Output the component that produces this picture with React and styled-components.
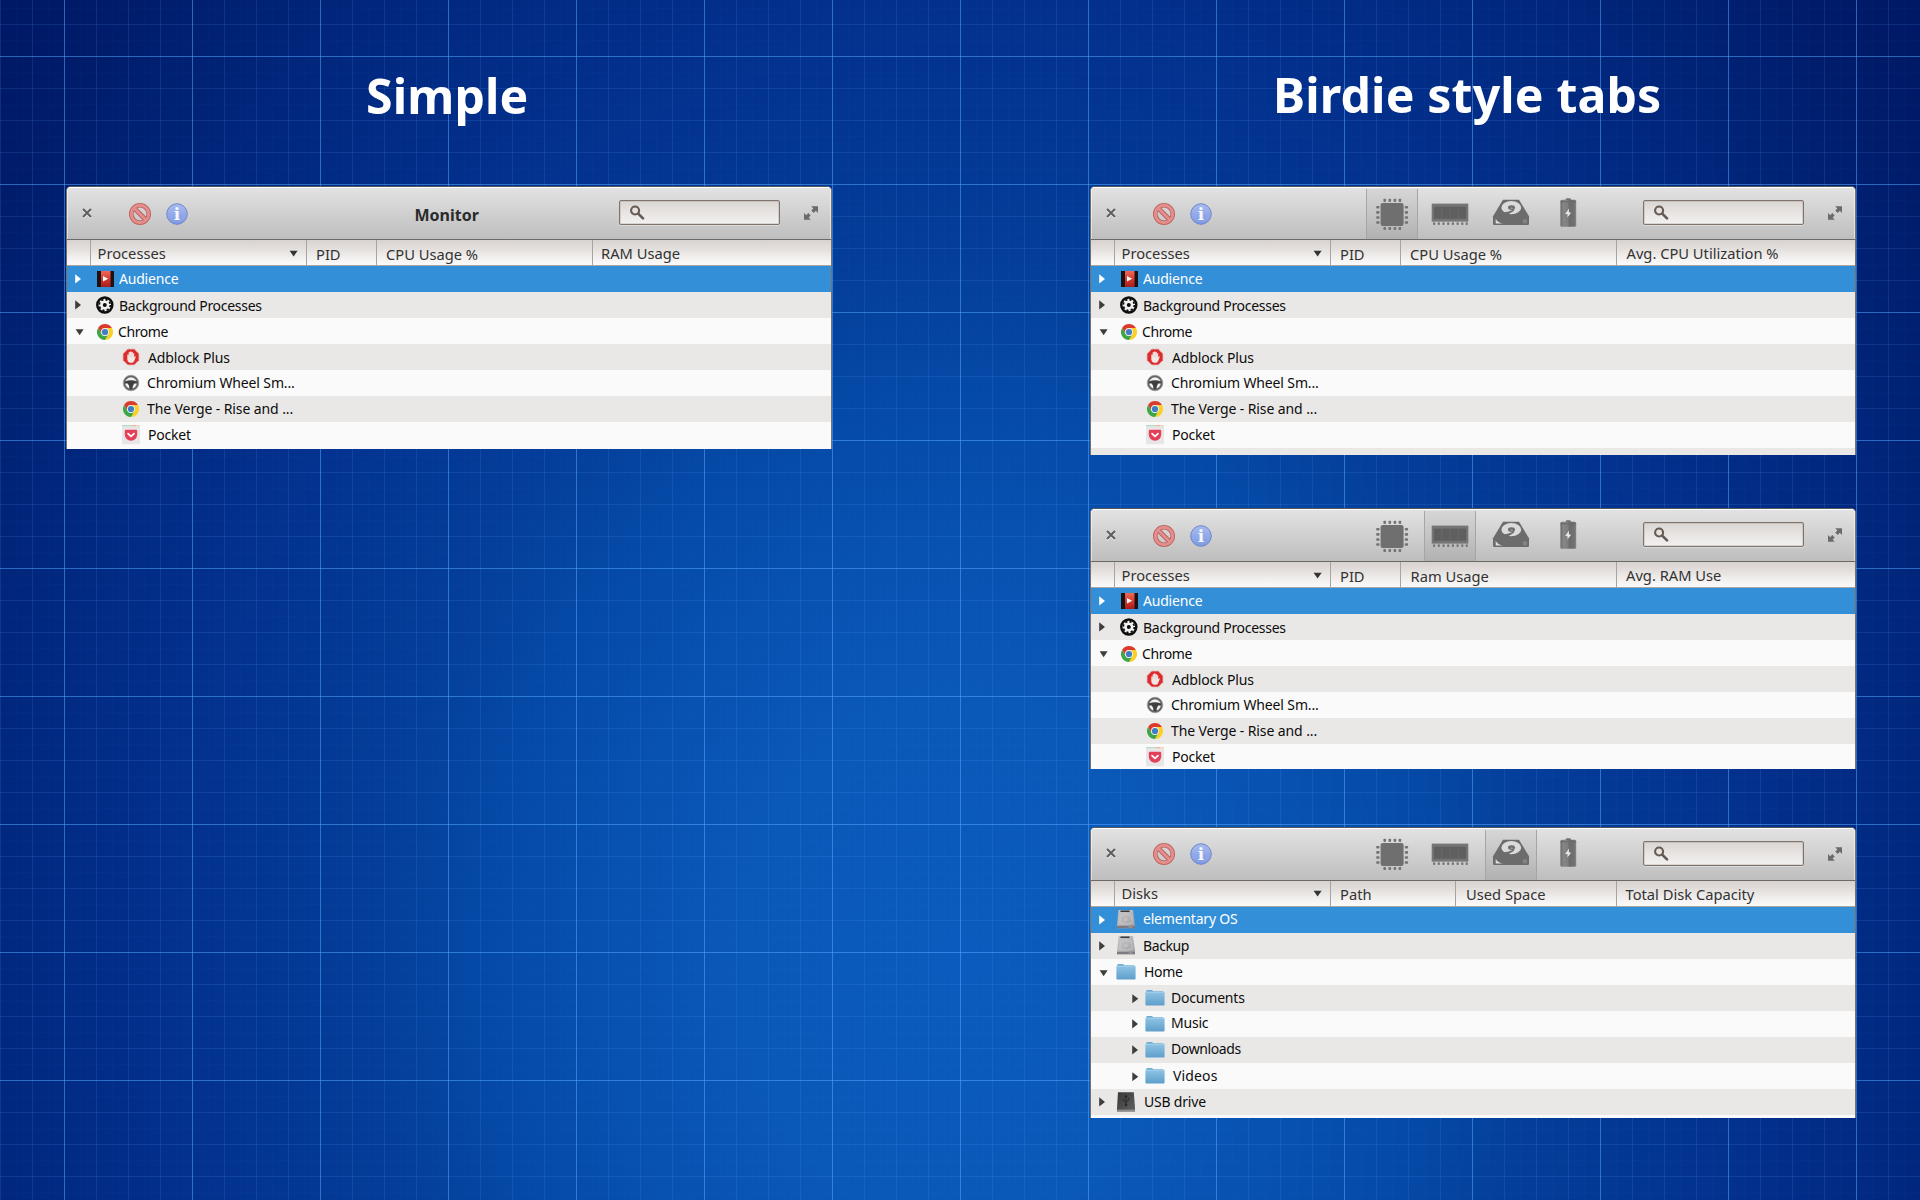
import React from 'react';
import styled, { createGlobalStyle, css } from 'styled-components';

const Global = createGlobalStyle`
  * { box-sizing: border-box; }
  body { margin: 0; overflow: hidden; }
  svg { display: block; flex: none; overflow: visible; }
`;

const major = 'rgba(80, 170, 255, 0.45)';
const minor = 'rgba(90, 160, 255, 0.13)';
const fine = 'rgba(90, 160, 255, 0.025)';

const Page = styled.main`
  display: flex;
  width: 1920px;
  height: 1200px;
  overflow: hidden;
  font-family: 'Noto Sans', 'Open Sans', sans-serif;
  background-image:
    linear-gradient(to right, ${major} 1px, transparent 1px),
    linear-gradient(to bottom, ${major} 1px, transparent 1px),
    linear-gradient(to right, ${minor} 1px, transparent 1px),
    linear-gradient(to bottom, ${minor} 1px, transparent 1px),
    linear-gradient(to right, ${fine} 1px, transparent 1px),
    linear-gradient(to bottom, ${fine} 1px, transparent 1px),
    radial-gradient(960px 1150px at 50% 960px,
      #0a5bbd 0%, #0a59b9 20%, #0852b1 36%, #0549a6 50%, #043f9b 60%, #033391 78%, #01287f 100%, #001b69 122%, #001460 145%);
  background-size: 128px 128px, 128px 128px, 32px 32px, 32px 32px, 16px 16px, 16px 16px, auto;
  background-position: 64px 0, 0 56px, 0 0, 0 24px, 0 0, 0 8px, 0 0;
`;

const Column = styled.section`
  display: flex;
  flex-direction: column;
  flex: none;
  width: 766px;
  margin-left: ${p => p.$left}px;
`;

const Heading = styled.h1`
  margin: 0;
  height: 186px;
  padding: ${p => p.$top}px 0 0 ${p => p.$left}px;
  color: #fff;
  font-size: 48.2px;
  font-weight: 700;
  line-height: 60px;
  letter-spacing: 0.15px;
  white-space: nowrap;
`;

const Frame = styled.article`
  display: flex;
  flex-direction: column;
  flex: none;
  height: ${p => p.$height}px;
  margin-bottom: ${p => p.$gap || 0}px;
  border: 1px solid #77716b;
  border-top-color: #54585c;
  border-bottom: 0;
  border-radius: 5px 5px 0 0;
  background: #fbfafa;
  overflow: hidden;
`;

const TitleBar = styled.header`
  display: flex;
  align-items: flex-start;
  flex: none;
  height: 53px;
  border-bottom: 1px solid #6d6967;
  background: linear-gradient(#e3e3e3, #d2d2d2 45%, #bebebe);
  box-shadow: inset 0 1px #fff, inset 1px 0 rgba(255, 255, 255, 0.5), inset -1px 0 rgba(255, 255, 255, 0.5);
`;

const Controls = styled.div`
  display: flex;
  align-items: flex-start;
  width: 552px;
  padding-left: 15px;
`;

const ToolButton = styled.button`
  flex: none;
  padding: 0;
  border: 0;
  background: none;
  margin: ${p => p.$top}px 0 0 ${p => p.$left || 0}px;
`;

const WindowTitle = styled.h2`
  margin: 15px 0 0 227px;
  color: #2b2b2b;
  font-size: 16px;
  line-height: 26px;
  font-weight: 700;
`;

const Tabs = styled.nav`
  display: flex;
  margin: 2px 0 0 154px;
`;

const Tab = styled.button`
  display: flex;
  align-items: flex-start;
  width: 52px;
  height: 50px;
  margin: 0 0 0 ${p => p.$gap}px;
  padding: 0;
  border: 1px solid transparent;
  border-width: 0 1px;
  background: none;
  ${p => p.$active && css`
    border-color: #9d9d9d #a5a5a5;
    background: linear-gradient(#d6d6d6, #c6c6c6 45%, #b1b1b1);
  `}

  svg { margin-top: ${p => -p.$lift}px; }
`;

const SearchField = styled.label`
  display: flex;
  flex: none;
  width: 161px;
  height: 25px;
  margin-top: ${p => p.$top}px;
  padding: 4px 0 0 10px;
  border: 1px solid #7f746d;
  border-radius: 2px;
  background: linear-gradient(#d9d5d2, #e6e3e1 45%, #f3f1f0);
  box-shadow: inset 0 0 0 1px rgba(160, 145, 135, 0.3), 0 1px rgba(255, 255, 255, 0.35);
`;

const ColumnHeads = styled.div`
  display: flex;
  flex: none;
  height: 26px;
  border-bottom: 1px solid #a9a5a1;
  background: linear-gradient(#d9d3d0, #e3dfdc 35%, #f6f4f3 80%, #fbfafa);
`;

const Head = styled.div`
  display: flex;
  justify-content: space-between;
  flex: ${p => (p.$width ? `0 0 ${p.$width}px` : '1')};
  padding: ${p => p.$top ?? 2}px 8px 0 ${p => p.$pad || 9}px;
  border-left: ${p => (p.$first ? 0 : '1px solid #a7a3a0')};
  color: #333;
  font-size: 14.7px;
  line-height: 25px;
  height: 25px;
  white-space: nowrap;
`;

const Row = styled.div`
  display: flex;
  flex: none;
  height: 26px;
  color: ${p => (p.$selected ? '#fff' : '#0c0c0c')};
  background: ${p => (p.$selected ? '#3390d8' : p.$shade ? '#eae8e6' : '#fbfafa')};
`;

const Twisty = styled.span`
  flex: none;
  width: 20px;
  margin-left: ${p => (p.$child ? 33 : 0)}px;
`;

const IconSlot = styled.span`
  flex: none;
  width: 20px;
  margin-left: ${p => p.$left}px;
`;

const Label = styled.span`
  margin-left: ${p => p.$left}px;
  margin-top: ${p => p.$drop}px;
  font-size: 14px;
  line-height: 26px;
  height: 26px;
  letter-spacing: ${p => p.$track ?? -0.2}px;
  white-space: nowrap;
`;

const CloseIcon = () => (
  <svg width="10" height="10" viewBox="0 0 10 10">
    <path d="M1 1l8 8M9 1l-8 8" stroke="#f2f2f2" strokeWidth="2" transform="translate(0 1)" />
    <path d="M1 1l8 8M9 1l-8 8" stroke="#5e5e5e" strokeWidth="2" />
  </svg>
);

const BanIcon = () => (
  <svg width="22" height="22" viewBox="0 0 22 22" fill="none">
    <circle cx="11" cy="11" r="8.7" stroke="#bd5f60" strokeWidth="4.6" />
    <path d="M5 5l12 12" stroke="#bd5f60" strokeWidth="4.6" />
    <circle cx="11" cy="11" r="8.7" stroke="#e38f8c" strokeWidth="2.9" />
    <path d="M4.8 4.8l12.4 12.4" stroke="#e38f8c" strokeWidth="2.7" />
  </svg>
);

const InfoIcon = () => (
  <svg width="22" height="22" viewBox="0 0 22 22">
    <defs>
      <linearGradient id="infoBlue" x2="0" y2="1">
        <stop stopColor="#a8bbed" />
        <stop offset="1" stopColor="#7f9ae3" />
      </linearGradient>
    </defs>
    <circle cx="11" cy="11" r="10.3" fill="url(#infoBlue)" stroke="#7088cd" />
    <text x="11" y="17" textAnchor="middle" fill="#f4f6fb" fontFamily="'DejaVu Serif', serif" fontWeight="700" fontSize="17">i</text>
  </svg>
);

const SearchIcon = () => (
  <svg width="15" height="15" viewBox="0 0 15 15" fill="none" stroke="#655b55">
    <circle cx="5.1" cy="5.5" r="4" strokeWidth="2.1" />
    <path d="M8.2 8.6l4.8 4.8" strokeWidth="2.7" strokeLinecap="round" />
  </svg>
);

const ExpandIcon = () => (
  <svg width="14" height="14" viewBox="0 0 14 14" fill="#6b6b6b">
    <path d="M7.2 0.3H14V7L11.8 4.8 9.7 6.9 7.3 4.5 9.4 2.4z" />
    <path d="M6.8 13.7H0V7L2.2 9.2 4.3 7.1 6.7 9.5 4.6 11.6z" />
  </svg>
);

const CpuIcon = () => (
  <svg width="50" height="50" viewBox="0 0 50 50" fill="#6f6f6f">
    <rect x="13.6" y="13.9" width="23" height="23" rx="2.2" />
    {[16.8, 21.9, 27, 32].map(v => (
      <g key={v} fill="#737373">
        <rect x={v - 0.4} y="9.8" width="2.6" height="3.1" rx="0.8" />
        <rect x={v - 0.4} y="38" width="2.6" height="3.1" rx="0.8" />
        <rect x="9.2" y={v + 0.2} width="3.3" height="2.6" rx="0.8" />
        <rect x="37.8" y={v + 0.2} width="3.3" height="2.6" rx="0.8" />
      </g>
    ))}
  </svg>
);

const RamIcon = () => (
  <svg width="50" height="50" viewBox="0 0 50 50" fill="#757575">
    <rect x="6.7" y="14.6" width="36.6" height="18" />
    <rect x="8.6" y="17.6" width="32.8" height="12.2" fill="#6b6b6b" />
    {[9, 17.2, 25.4, 33.6].map(x => (
      <rect key={x} x={x} y="17.8" width="7.4" height="11.8" fill="#5f5f5f" />
    ))}
    {[8, 12.7, 17.4, 22.1, 26.8, 31.5, 36.2, 40.6].map(x => (
      <rect key={x} x={x} y="33.2" width="2.2" height="2.9" rx="0.8" />
    ))}
  </svg>
);

const HddIcon = () => (
  <svg width="50" height="50" viewBox="0 0 50 50">
    <path d="M17 10.7H33L43 27.2V34.7Q43 36 41.7 36H8.3Q7 36 7 34.7V27.2z" fill="#6c6c6c" />
    <ellipse cx="25.3" cy="18.7" rx="9.9" ry="6.6" fill="#dadada" />
    <ellipse cx="25.5" cy="18.6" rx="3.5" ry="2.3" fill="#6c6c6c" />
    <ellipse cx="25.5" cy="19.2" rx="1.3" ry="0.6" fill="#a8a8a8" />
    <path d="M14 22.8Q18.5 23.8 22.6 22.4 26.2 21.8 28.6 19.5 28.4 22 25.6 23.2L20 26.4H15z" fill="#6c6c6c" />
    <path d="M9.7 29.7v4.7h7.2Q12 34 9.7 29.7z" fill="#dedede" />
    <rect x="36.8" y="30.5" width="4.2" height="3.8" fill="#858585" />
  </svg>
);

const BatteryIcon = () => (
  <svg width="50" height="50" viewBox="0 0 50 50">
    <defs>
      <linearGradient id="cell" x2="1">
        <stop stopColor="#6b6b6b" />
        <stop offset="0.2" stopColor="#868686" />
        <stop offset="0.45" stopColor="#7e7e7e" />
        <stop offset="0.58" stopColor="#6c6c6c" />
        <stop offset="0.85" stopColor="#707070" />
        <stop offset="1" stopColor="#838383" />
      </linearGradient>
    </defs>
    <rect x="22.8" y="9.2" width="5" height="3" rx="1" fill="#707070" />
    <rect x="17.4" y="10.8" width="15.8" height="27" rx="1.6" fill="url(#cell)" />
    <path d="M17.5 12.8h15.6" stroke="#686868" strokeWidth="1" />
    <path d="M26 19.6L22.2 24.9 24.6 25.3 24.4 28.6 28.2 23.7 25.9 23.2z" fill="#e6e6e6" />
  </svg>
);

const Triangle = ({ open, child, selected }) => (
  <svg width="20" height="26" viewBox="0 0 20 26" fill={selected ? '#fff' : '#3d3d3a'}>
    {open ? <path d="M8.6 11.2h8l-4 6z" /> : <path d={child ? 'M8.3 9.3v9l6-4.5z' : 'M8.2 8.2v9.4l5.8-4.7z'} />}
  </svg>
);

const AudienceIcon = () => (
  <svg width="20" height="26" viewBox="0 0 20 26">
    <defs>
      <linearGradient id="film" x2="0" y2="1">
        <stop stopColor="#ee6a55" />
        <stop offset="0.5" stopColor="#d63a2f" />
        <stop offset="1" stopColor="#a81c1a" />
      </linearGradient>
    </defs>
    <rect x="2" y="5" width="17" height="16" fill="#1d1210" />
    <rect x="6" y="5" width="9.5" height="16" fill="url(#film)" />
    <path d="M8 10v5.6l5.2-2.8z" fill="#fff" />
  </svg>
);

const GearIcon = () => (
  <svg width="20" height="26" viewBox="0 0 20 26" fill="none" stroke="#0d0d0d">
    <circle cx="9.8" cy="13" r="7.5" fill="#f4f2f1" strokeWidth="2.5" />
    <circle cx="9.8" cy="13" r="5.5" strokeWidth="1.7" strokeDasharray="2.2 2.12" />
    <circle cx="9.8" cy="13" r="2" fill="#0d0d0d" stroke="none" />
  </svg>
);

const ChromeIcon = ({ cy = 14 }) => {
  const arm = 'M-6.93-4A8 8 0 0 1 6.93-4H0A4 4 0 0 0-3.46 2z';
  return (
    <svg width="20" height="26" viewBox="0 0 20 26">
      <g transform={`translate(10 ${cy})`}>
        <path d={arm} fill="#dc3a2c" />
        <path d={arm} fill="#fbd023" transform="rotate(120)" />
        <path d={arm} fill="#3fa648" transform="rotate(240)" />
        <circle r="3.9" fill="#e9eddf" />
        <circle r="3.1" fill="#3f7dc6" />
      </g>
    </svg>
  );
};

const AdblockIcon = () => (
  <svg width="20" height="26" viewBox="0 0 20 26">
    <path d="M6.7 5h6.6l4.7 4.7v6.6L13.3 21H6.7L2 16.3V9.7z" fill="#e02a2c" stroke="#d9c0be" strokeWidth="0.8" />
    <g transform="translate(10 13) scale(0.86) translate(-10 -13)">
      <path d="M5.7 10.5q.8-1 1.6 0V7.8q.8-1 1.6 0V6.8q.8-1 1.7 0v1q.8-1 1.6 0v1.2q.8-.9 1.5 0v4.2l1-1q1 0 .8.9l-1.9 4.7q-.8 1.9-3 1.9-4.4 0-4.9-3.6z" fill="#f0e8e6" />
      <path d="M7.3 10.5v3M8.9 8.5v4.6M10.6 8v5M12.2 9v4.2" stroke="#d9b9b5" strokeWidth="0.4" />
    </g>
  </svg>
);

const WheelIcon = () => (
  <svg width="20" height="26" viewBox="0 0 20 26">
    <circle cx="10" cy="13" r="6.8" fill="#f1f0ef" stroke="#636363" strokeWidth="2" />
    <circle cx="10" cy="13" r="7.8" fill="none" stroke="#999" strokeWidth="0.7" />
    <path d="M4 11.6Q10 8.8 16 11.6V13.4H13.2Q11.7 15 11.5 19H8.5Q8.3 15 6.8 13.4H4z" fill="#3e3e3e" />
  </svg>
);

const PocketIcon = () => (
  <svg width="20" height="26" viewBox="0 0 20 26">
    <rect x="1" y="3.2" width="18" height="19" rx="1" fill="#e7e5e5" />
    <path d="M1 3.7h5" stroke="#9fd8c8" />
    <path d="M6 3.7h5" stroke="#b6dcae" />
    <path d="M11 3.7h4" stroke="#f0a3a6" />
    <path d="M15 3.7h4" stroke="#f3d49b" />
    <path d="M3.8 9Q3.8 7.8 5 7.8H15Q16.2 7.8 16.2 9V12.5A6.2 6.2 0 0 1 3.8 12.5z" fill="#e5405a" />
    <path d="M7 11.6l3 2.8 3-2.8" stroke="#fff" strokeWidth="1.7" fill="none" strokeLinecap="round" strokeLinejoin="round" />
  </svg>
);

const DriveIcon = () => (
  <svg width="20" height="26" viewBox="0 0 20 26">
    <defs>
      <linearGradient id="metal" x2="1" y2="1">
        <stop stopColor="#c6c6c8" />
        <stop offset="0.5" stopColor="#b6b5b8" />
        <stop offset="1" stopColor="#9b9a9e" />
      </linearGradient>
    </defs>
    <path d="M2.6 3H17L19 18.6V21.3H1V18.6z" fill="url(#metal)" />
    <path d="M1 18.8H19V21.3H1z" fill="#7d7b80" />
    <path d="M4.5 4.3h9" stroke="#39383b" strokeWidth="1.5" />
    <path d="M4.6 8.5Q10 5.6 15.4 8.5L16.4 16Q10 18.8 3.8 16z" fill="none" stroke="#cbcacd" strokeWidth="0.8" />
    <circle cx="9.8" cy="12.4" r="1.5" fill="#c4c3c6" />
    <path d="M12.5 20h4" stroke="#a8a7aa" strokeWidth="0.9" />
  </svg>
);

const UsbIcon = () => (
  <svg width="20" height="26" viewBox="0 0 20 26">
    <defs>
      <linearGradient id="dark" x2="1" y2="1">
        <stop stopColor="#383838" />
        <stop offset="1" stopColor="#626262" />
      </linearGradient>
    </defs>
    <path d="M2 3.3H17.8L19 18.6V22.4H1V18.6z" fill="url(#dark)" />
    <path d="M1.2 20.6H18.8V22.4H1.2z" fill="#8d8d8d" />
    <g stroke="#262626" fill="none" strokeWidth="0.9">
      <path d="M10 15.5V7M10 13.5L7.2 11.6V9.8M10 12.6l2.8-1.7V9.2" />
      <circle cx="10" cy="16" r="0.9" fill="#262626" />
      <path d="M8.9 8L10 6.3 11.1 8z" fill="#262626" />
    </g>
  </svg>
);

const FolderIcon = () => (
  <svg width="20" height="26" viewBox="0 0 20 26">
    <defs>
      <linearGradient id="folder" x2="0" y2="1">
        <stop stopColor="#8fc3e4" />
        <stop offset="1" stopColor="#5e9fcb" />
      </linearGradient>
    </defs>
    <path d="M1.2 6.2Q1.2 5 2.4 5H6.6Q7.6 5 8 6.2H18V10H1.2z" fill="#6fadd4" />
    <path d="M0.4 7.6Q0.4 6.8 1.2 6.8H18.8Q19.6 6.8 19.6 7.6V19.6Q19.6 20.4 18.8 20.4H1.2Q0.4 20.4 0.4 19.6z" fill="url(#folder)" />
    <path d="M0.8 7.3H19.2" stroke="#a9d3ec" strokeWidth="0.8" />
  </svg>
);

const tabs = [
  { id: 'cpu', Icon: CpuIcon, gap: 0 },
  { id: 'ram', Icon: RamIcon, gap: 6 },
  { id: 'disk', Icon: HddIcon, gap: 9 },
  { id: 'battery', Icon: BatteryIcon, gap: 5 },
];

const processes = [
  { text: 'Audience', Icon: AudienceIcon, left: 4, drop: 0, twisty: true },
  { text: 'Background Processes', Icon: GearIcon, left: 4, drop: 1, twisty: true, track: -0.28 },
  { text: 'Chrome', Icon: ChromeIcon, left: 3, drop: 1, twisty: true, open: true, track: -0.42 },
  { text: 'Adblock Plus', Icon: AdblockIcon, left: 7, drop: 1, child: true, track: -0.15 },
  { text: 'Chromium Wheel Sm...', Icon: WheelIcon, left: 6, drop: 0, child: true, track: -0.13 },
  { text: 'The Verge - Rise and ...', Icon: ChromeIcon, left: 6, drop: 0, child: true, cy: 13, track: -0.1 },
  { text: 'Pocket', Icon: PocketIcon, left: 7, drop: 0, child: true },
];

const disks = [
  { text: 'elementary OS', Icon: DriveIcon, left: 7, drop: -1, twisty: true },
  { text: 'Backup', Icon: DriveIcon, left: 7, drop: 0, twisty: true, track: -0.4 },
  { text: 'Home', Icon: FolderIcon, left: 8, drop: 0, twisty: true, open: true, track: -0.3 },
  { text: 'Documents', Icon: FolderIcon, left: 6, drop: 0, twisty: true, child: true },
  { text: 'Music', Icon: FolderIcon, left: 6, drop: -1, twisty: true, child: true },
  { text: 'Downloads', Icon: FolderIcon, left: 6, drop: -1, twisty: true, child: true, track: -0.38 },
  { text: 'Videos', Icon: FolderIcon, left: 8, drop: 0, twisty: true, child: true, track: 0.15 },
  { text: 'USB drive', Icon: UsbIcon, left: 8, drop: 0, twisty: true },
];

function Monitor({ height, gap, title, active, heads, rows, diskView, filler }) {
  const lift = diskView ? 1 : 0;
  const iconLeft = child => (child ? 1 : diskView ? 5 : 8);
  return (
    <Frame $height={height} $gap={gap}>
      <TitleBar>
        <Controls>
          <ToolButton $top={21 - lift} aria-label="Close"><CloseIcon /></ToolButton>
          <ToolButton $top={16 - lift} $left={37} aria-label="End process"><BanIcon /></ToolButton>
          <ToolButton $top={15.5 - lift} $left={14.5} aria-label="Details"><InfoIcon /></ToolButton>
          {title && <WindowTitle>{title}</WindowTitle>}
          {active && (
            <Tabs>
              {tabs.map(({ id, Icon, gap: space }) => (
                <Tab key={id} $active={id === active} $gap={space} $lift={lift} aria-label={id}><Icon /></Tab>
              ))}
            </Tabs>
          )}
        </Controls>
        <SearchField $top={13}><SearchIcon /></SearchField>
        <ToolButton $top={19} $left={24} aria-label="Maximize"><ExpandIcon /></ToolButton>
      </TitleBar>
      <ColumnHeads>
        <Head $first $width={23} />
        {heads.map((h, i) => (
          <Head key={h.text} $width={h.width} $top={h.top} $pad={h.pad}>
            {h.text}
            {i === 0 && (
              <svg width="9" height="25" viewBox="0 0 9 25" fill="#333"><path d="M0.6 9.8h8l-4 5.6z" /></svg>
            )}
          </Head>
        ))}
      </ColumnHeads>
      {rows.map(({ text, Icon, left, drop, twisty, open, child, cy, track }, i) => (
        <Row key={text} $selected={i === 0} $shade={i % 2 === 1}>
          <Twisty $child={child}>
            {twisty && <Triangle open={open} child={child && drop === 0} selected={i === 0} />}
          </Twisty>
          <IconSlot $left={iconLeft(child)}><Icon cy={cy} /></IconSlot>
          <Label $left={left} $drop={drop} $track={track}>{text}</Label>
        </Row>
      ))}
      {filler && <Row $shade />}
    </Frame>
  );
}

const first = (text, top = 1) => ({ text, width: 216, pad: 6.5, top });

export default function App() {
  return (
    <>
      <Global />
      <Page>
        <Column $left={66}>
          <Heading $left={300} $top={65}>Simple</Heading>
          <Monitor
            height={263}
            title="Monitor"
            rows={processes}
            heads={[first('Processes'), { text: 'PID', width: 70 }, { text: 'CPU Usage %', width: 216 }, { text: 'RAM Usage', top: 1, pad: 8 }]}
          />
        </Column>
        <Column $left={258}>
          <Heading $left={183} $top={64}>Birdie style tabs</Heading>
          <Monitor
            height={269}
            gap={53}
            active="cpu"
            rows={processes}
            filler
            heads={[first('Processes'), { text: 'PID', width: 70 }, { text: 'CPU Usage %', width: 216 }, { text: 'Avg. CPU Utilization %', top: 1, pad: 9.5 }]}
          />
          <Monitor
            height={261}
            gap={58}
            active="ram"
            rows={processes}
            heads={[first('Processes'), { text: 'PID', width: 70 }, { text: 'Ram Usage', width: 216, pad: 9.5 }, { text: 'Avg. RAM Use', top: 1, pad: 9 }]}
          />
          <Monitor
            height={291}
            active="disk"
            rows={disks}
            diskView
            heads={[first('Disks', 0), { text: 'Path', width: 125, top: 1 }, { text: 'Used Space', width: 161, top: 1, pad: 10 }, { text: 'Total Disk Capacity', top: 1, pad: 8.5 }]}
          />
        </Column>
      </Page>
    </>
  );
}
